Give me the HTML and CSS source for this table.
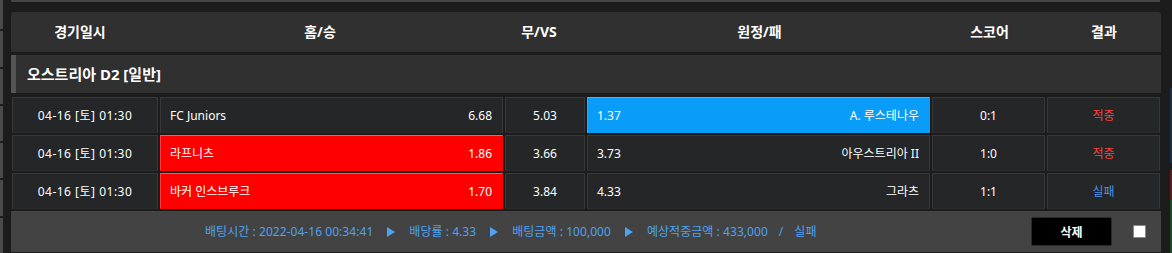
FILE: index.html
```html
<!DOCTYPE html>
<html lang="ko">
<head>
<meta charset="utf-8">
<link rel="stylesheet" href="styles.css">
</head>
<body>
<div class="page">
  <div class="left-rail">
    <span></span><span></span><span></span><span></span><span></span><span></span><span></span>
  </div>
  <div class="main">
    <div class="prev-panel"></div>
    <div class="board">
      <div class="head">
        <div>경기일시</div>
        <div>홈/승</div>
        <div>무/VS</div>
        <div>원정/패</div>
        <div>스코어</div>
        <div>결과</div>
      </div>
      <div class="league">오스트리아 D2 [일반]</div>
      <div class="rows">
        <div class="row">
          <div class="cell center date">04-16 [토] 01:30</div>
          <div class="cell split"><span>FC Juniors</span><span>6.68</span></div>
          <div class="cell center">5.03</div>
          <div class="cell split blue"><span>1.37</span><span>A. 루스테나우</span></div>
          <div class="cell center">0:1</div>
          <div class="cell center win">적중</div>
        </div>
        <div class="row">
          <div class="cell center date">04-16 [토] 01:30</div>
          <div class="cell split red"><span>라프니츠</span><span>1.86</span></div>
          <div class="cell center">3.66</div>
          <div class="cell split"><span>3.73</span><span>아우스트리아 II</span></div>
          <div class="cell center">1:0</div>
          <div class="cell center win">적중</div>
        </div>
        <div class="row">
          <div class="cell center date">04-16 [토] 01:30</div>
          <div class="cell split red"><span>바커 인스브루크</span><span>1.70</span></div>
          <div class="cell center">3.84</div>
          <div class="cell split"><span>4.33</span><span>그라츠</span></div>
          <div class="cell center">1:1</div>
          <div class="cell center lose">실패</div>
        </div>
      </div>
      <div class="foot">
        <div class="info">
          <span>배팅시간 : 2022-04-16 00:34:41</span>
          <span class="arrow"></span>
          <span>배당률 : 4.33</span>
          <span class="arrow"></span>
          <span>배팅금액 : 100,000</span>
          <span class="arrow"></span>
          <span>예상적중금액 : 433,000</span>
          <span class="slash">/</span>
          <span>실패</span>
        </div>
        <button class="del">삭제</button>
        <span class="check"></span>
      </div>
    </div>
  </div>
  <div class="right-rail">
    <span class="r-dark"></span>
    <span class="r-blue"></span>
    <span class="r-dark2"></span>
    <span class="r-red"></span>
    <span class="r-green"></span>
  </div>
</div>
</body>
</html>
```
FILE: styles.css
```css
* { box-sizing: border-box; }
html, body {
  margin: 0;
  padding: 0;
  background: #1c1c1c;
  width: 1172px;
  height: 253px;
  overflow: hidden;
}
body {
  font-family: "Noto Sans", "Noto Sans CJK KR", sans-serif;
  color: #fff;
  font-size: 12px;
}
.page {
  display: flex;
  height: 253px;
}
.left-rail {
  width: 3px;
  display: flex;
  flex-direction: column;
  gap: 2px;
  margin-right: 8px;
}
.left-rail span {
  display: block;
  height: 36px;
  background: #4a4a4a;
}
.left-rail span:first-child { height: 30px; }
.main {
  width: 1150px;
  display: flex;
  flex-direction: column;
}
.prev-panel {
  height: 2px;
  background: #454545;
  margin-right: 1px;
}
.board {
  margin-top: 10px;
  display: flex;
  flex-direction: column;
}
.head {
  height: 40px;
  background: #303030;
  border-radius: 3px 3px 0 0;
  display: grid;
  grid-template-columns: 138px 342px 96px 345px 115px 114px;
  align-items: center;
  font-size: 14px;
  font-weight: 700;
  line-height: 18px;
}
.head div { text-align: center; }
.league {
  margin-top: 3px;
  height: 38px;
  background: #303030;
  border-left: 5px solid #555;
  padding-left: 11px;
  display: flex;
  align-items: center;
  font-size: 15px;
  font-weight: 700;
  line-height: 18px;
}
.rows {
  margin-top: 4px;
  padding: 0 1px;
  display: flex;
  flex-direction: column;
  gap: 2px;
}
.row {
  display: grid;
  grid-template-columns: 146px 343px 80px 343px 113px 113px;
  gap: 2px;
  height: 36px;
}
.cell {
  background: #252628;
  border: 1px solid #383838;
  border-bottom-color: #2c2c2c;
  display: flex;
  align-items: center;
  line-height: 16px;
  color: #fff;
  padding-top: 1px;
}
.center { justify-content: center; }
.date { letter-spacing: 0.5px; }
.split {
  justify-content: space-between;
  padding: 1px 10px 0 9px;
}
.red {
  background: #ff0000;
  border-color: #ff5a5a #f00 #f00 #ff3a3a;
}
.blue {
  background: #099cf8;
  border-color: #45b5ff #099cf8 #099cf8 #30acff;
}
.win { color: #ff4040; }
.lose { color: #4a93e6; }
.foot {
  margin-top: 2px;
  height: 41px;
  background: #434343;
  display: flex;
  align-items: center;
}
.info {
  margin-left: 194px;
  display: flex;
  align-items: center;
  gap: 13px;
  color: #4da2f2;
  font-size: 12px;
  line-height: 16px;
  letter-spacing: 0.05px;
  flex: 1;
}
.info .arrow {
  width: 0;
  height: 0;
  border-top: 5px solid transparent;
  border-bottom: 5px solid transparent;
  border-left: 8px solid #4da2f2;
  margin: 0 1px;
}
.info .slash { margin: 0 -2px; }
.del {
  width: 81px;
  height: 29px;
  background: #000;
  border: 1px solid #2a2a2a;
  border-radius: 2px;
  color: #fff;
  font-family: "Noto Sans CJK KR", sans-serif;
  font-weight: 700;
  font-size: 12px;
  padding: 0;
  margin-right: 21px;
  cursor: pointer;
}
.check {
  width: 13px;
  height: 13px;
  background: #fff;
  border: 1px solid #888;
  border-radius: 1px;
  margin-right: 15px;
}
.right-rail {
  flex: 1;
  display: flex;
  flex-direction: column;
  align-items: flex-end;
}
.right-rail span {
  display: block;
  width: 2px;
}
.r-dark { height: 88px; }
.r-blue { height: 75px; background: #1e2c44; }
.r-dark2 { height: 7px; }
.r-red { height: 30px; background: #5a1c1c; }
.r-green { flex: 1; background: #1b4a2a; }
```
